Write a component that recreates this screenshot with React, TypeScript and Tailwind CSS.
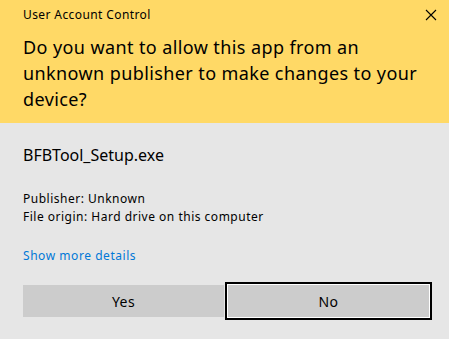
import React from "react";

export default function App() {
  const font = { fontFamily: '"Noto Sans", "Open Sans", sans-serif' };
  return (
    <div className="w-[449px] h-[339px] bg-[#e6e6e6] text-black overflow-hidden" style={font}>
      <div className="bg-[#ffd966] h-[123px] pl-[23px] pt-[7px] relative">
        <div className="text-[12px] leading-[16px] tracking-[0.4px]">User Account Control</div>
        <svg className="absolute left-[425px] top-[9px]" width="12" height="12" viewBox="0 0 12 12">
          <path d="M1 1 L11 11 M11 1 L1 11" stroke="#000" strokeWidth="1.1" fill="none" />
        </svg>
        <div className="mt-[11px] text-[18px] leading-[26px] tracking-[0.4px] w-[415px]">
          Do you want to allow this app from an unknown publisher to make changes to your device?
        </div>
      </div>
      <div className="pl-[23px]">
        <div className="mt-[22px] text-[16px] leading-[20px]">BFBTool_Setup.exe</div>
        <div className="mt-[25px] text-[12px] leading-[18px] tracking-[0.5px]">
          <div>Publisher: Unknown</div>
          <div>File origin: Hard drive on this computer</div>
        </div>
        <div className="mt-[21px] text-[12px] leading-[18px] tracking-[0.55px] text-[#0078d7]">Show more details</div>
        <div className="mt-[20px] flex gap-[4px]">
          <div className="w-[201px] h-[32px] bg-[#cccccc] flex items-center justify-center text-[14px] tracking-[0.4px]">Yes</div>
          <div className="w-[201px] h-[32px] bg-[#cccccc] flex items-center justify-center text-[14px] tracking-[0.4px] shadow-[0_0_0_1px_#ffffff,0_0_0_3px_#000000]">No</div>
        </div>
      </div>
    </div>
  );
}
